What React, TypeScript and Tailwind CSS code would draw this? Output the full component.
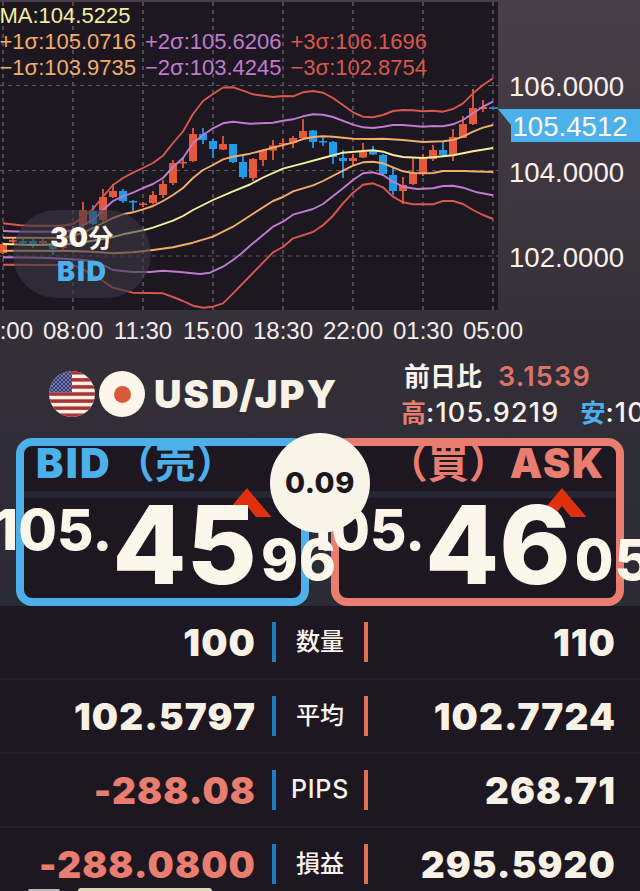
const GRID_X = [3, 73, 143, 213, 283, 353, 423, 493];
const GRID_Y = [85.5, 170.5, 256];

const TIMES = ["08:00", "11:30", "15:00", "18:30", "22:00", "01:30", "05:00"];

const PRICES = [
  { label: "106.0000", y: 96 },
  { label: "104.0000", y: 182 },
  { label: "102.0000", y: 267 },
];

// upper to lower bands
const BANDS = [
  {
    color: "#d9584c",
    points:
      "3,223.3 20,225.3 33,225.7 63,225.7 73,224 83,217 93,209 103,196.7 113,185 123,178 133,172.7 143,168 153,163 163,155.7 173,143 183,131.5 193,114 203,101 213,94 223,87.5 233,87.3 243,90.7 253,94.3 273,97 283,96 293,96.3 303,92.3 313,91 323,92.7 333,98 353,112.3 363,116.7 373,117.3 383,115 393,111 403,110 413,110.3 423,111.3 433,110.7 443,111.7 453,109 463,103.3 473,93.3 483,85 493,78.3",
  },
  {
    color: "#c07bcf",
    points:
      "3,231 23,231.7 63,231.7 73,230 83,225 93,220 103,210 113,201 123,196.3 133,192.7 143,188 153,184 163,178 173,167 183,158 193,143 203,135 213,128.3 223,123.3 233,121.7 250,123.7 273,122.7 283,120.7 293,119.3 303,116.3 313,114.3 323,114.7 333,117 353,124.7 363,127.3 373,128 383,126.7 393,125 403,125 423,126.7 433,126 443,126.3 453,124.3 463,120 473,113.3 483,106.7 493,101.7",
  },
  {
    color: "#f2ae69",
    points:
      "3,237.7 63,238 83,233 103,223 113,218 123,214.3 133,212.3 143,209.3 153,206 163,201 173,195 183,188 193,178 203,170 213,165 223,159.3 233,156.7 250,153.7 273,147.7 293,142.7 303,139 313,137 323,136.3 333,136.7 353,138.7 373,139 383,138.7 403,140 423,142 443,141.3 453,140 463,136.7 473,131.7 483,127.7 493,125",
  },
  {
    color: "#f5ef9c",
    points:
      "3,244 33,245 73,244 103,239 113,237 123,234.3 143,230.3 153,227.7 173,220.7 183,216 193,210 213,200 233,191.3 250,184.5 263,177.5 283,168.7 303,163.3 323,158 343,152.7 363,151 373,150.3 383,151.7 393,155 403,157 423,158 433,157.3 453,155.3 473,151.3 493,148",
  },
  {
    color: "#f2ae69",
    points:
      "3,250.7 73,251 93,251.7 113,253.3 133,252.3 153,250 173,247.3 193,242.7 213,236.7 233,226.7 250,215.7 273,201 283,197 293,191.3 313,185.3 323,181 343,170.7 353,165.7 363,162.3 373,161.7 383,163.3 393,167.3 403,171.3 413,173 423,173.3 433,173 443,171 463,171 493,172",
  },
  {
    color: "#c07bcf",
    points:
      "3,257.3 43,257.7 73,259.3 93,261 103,265 113,270 133,272 150,272 163,270.7 180,272 200,274 210,272.7 223,266.7 233,260 242,253 250,245.7 273,226.7 283,221.7 293,214.7 313,209 323,204 343,188.3 353,180 363,173.3 373,172.3 383,175 393,181.7 403,186.7 417,189 433,188.3 443,186 453,185.7 463,187.7 477,192.3 493,195.3",
  },
  {
    color: "#d9584c",
    points:
      "3,264.7 73,265 83,269.3 103,281 113,287.7 133,292.7 163,293.3 173,297 183,301 193,305.7 203,307.7 213,306.7 223,303.3 233,293.3 250,276 273,252.3 283,247 293,238.3 313,232 323,225.3 333,215.7 343,203.3 353,192.7 363,184.7 373,183.3 383,187.3 393,196.7 403,202.3 413,204.3 433,204.3 443,201 453,201 463,204 473,210 483,215 493,219",
  },
];

// x, high, low, body top, body bottom, direction (1 up, 0 down)
const CANDLES = [
  [3, 243, 254, 244, 253, 1],
  [13, 237, 245, 240, 242, 1],
  [23, 239, 244, 241, 243, 0],
  [33, 239, 248, 241, 245, 0],
  [43, 239, 244, 241, 243, 1],
  [53, 245, 255, 245, 249, 0],
  [63, 241, 250, 244, 248, 1],
  [73, 226, 246, 230, 244, 1],
  [83, 202, 230, 210, 225, 1],
  [93, 205, 225, 211, 224, 0],
  [103, 189, 222, 197, 220, 1],
  [113, 184, 198, 191, 197, 1],
  [123, 189, 203, 191, 201, 0],
  [133, 200, 211, 201, 202.5, 0],
  [143, 202, 207, 203.5, 205, 1],
  [153, 191, 204, 195, 203, 1],
  [163, 180, 198, 184, 195, 1],
  [173, 160, 185, 163, 183, 1],
  [183, 158, 168, 162, 163.5, 1],
  [193, 128, 162, 134, 161, 1],
  [203, 128, 144, 134, 140, 0],
  [213, 139, 158, 141, 149, 0],
  [223, 136, 150, 144, 149.5, 1],
  [233, 144, 163, 144, 162, 0],
  [243, 156, 179, 162, 177, 0],
  [253, 158, 181, 159, 178, 1],
  [263, 149, 166, 150, 160, 1],
  [273, 140, 160, 145.5, 150.5, 1],
  [283, 139, 149, 143, 144.5, 1],
  [293, 136, 148, 138, 143, 1],
  [303, 119, 139, 131, 138, 1],
  [313, 130, 148, 130.5, 142, 0],
  [323, 137, 146, 141, 142.5, 0],
  [333, 141, 164, 142, 157, 0],
  [343, 150, 178, 158, 161, 0],
  [353, 154, 165, 158, 161, 1],
  [363, 143, 158, 152, 157.5, 1],
  [373, 146, 155, 150, 154.5, 0],
  [383, 154, 175, 155, 174, 0],
  [393, 167, 195, 175, 191, 0],
  [403, 177, 204, 185, 191, 1],
  [413, 158, 185, 173, 184, 1],
  [423, 154, 176, 157, 174, 1],
  [433, 145, 161, 150, 159, 1],
  [443, 142, 156, 150, 155, 0],
  [453, 129, 161, 137, 155, 1],
  [463, 116, 138, 124, 138, 1],
  [473, 89, 125, 108, 124, 1],
  [483, 100, 112, 107, 109, 1],
];

const ROWS = [
  { label: "数量", bid: "100", ask: "110" },
  { label: "平均", bid: "102.5797", ask: "102.7724" },
  { label: "PIPS", bid: "-288.08", ask: "268.71" },
  { label: "損益", bid: "-288.0800", ask: "295.5920" },
];

function Chart() {
  return (
    <svg width="640" height="350" viewBox="0 0 640 350" className="block font-['Liberation_Sans',sans-serif]">
      <rect x="0" y="2" width="498" height="308" fill="#1d1721" />
      <g stroke="#5d5761" fill="none">
        {GRID_X.map((x) => (
          <line key={x} x1={x} x2={x} y1="2" y2="310" strokeWidth="1.6" strokeDasharray="4 4" />
        ))}
        {GRID_Y.map((y) => (
          <line key={y} x1="0" x2="498" y1={y} y2={y} strokeWidth="1.2" strokeDasharray="4 4" />
        ))}
      </g>
      {CANDLES.map(([x, high, low, top, bottom, up]) => (
        <g key={x} fill={up ? "#e4593a" : "#209be8"}>
          <rect x={x - 0.9} y={high} width="1.8" height={low - high} />
          <rect x={x - 4} y={top} width="8" height={bottom - top} />
        </g>
      ))}
      <rect x="489" y="107.3" width="9" height="1.6" fill="#209be8" />
      {BANDS.map((b, i) => (
        <polyline key={i} points={b.points} fill="none" stroke={b.color} strokeWidth="1.9" strokeLinejoin="round" />
      ))}

      <g fontSize="22">
        <text x="-0.5" y="23" fill="#f3ee9f">MA:104.5225</text>
        <text x="-0.5" y="49" fill="#f2ae69">+1σ:105.0716</text>
        <text x="-0.5" y="75" fill="#f2ae69">−1σ:103.9735</text>
        <text x="145" y="49" fill="#c07bcf">+2σ:105.6206</text>
        <text x="145" y="75" fill="#c07bcf">−2σ:103.4245</text>
        <text x="290.5" y="49" fill="#d9584c">+3σ:106.1696</text>
        <text x="290.5" y="75" fill="#d9584c">−3σ:102.8754</text>
      </g>

      <g fontSize="27.6" fill="#fbf1ea">
        {PRICES.map((p) => (
          <text key={p.label} x="509" y={p.y}>{p.label}</text>
        ))}
      </g>
      <path d="M498 109H640V142H511V125Z" fill="#4cb1ea" />
      <text x="512.5" y="136" fontSize="27.6" fill="#fff6ee">105.4512</text>

      <g fontSize="24" fill="#f4ece8">
        <text x="33" y="339" textAnchor="end">:00</text>
        {TIMES.map((t, i) => (
          <text key={t} x={GRID_X[i + 1]} y="339" textAnchor="middle">{t}</text>
        ))}
      </g>
    </svg>
  );
}

function UsFlag() {
  return (
    <svg width="46" height="46" viewBox="0 0 46 46" className="shrink-0">
      <defs>
        <clipPath id="us"><circle cx="23" cy="23" r="23" /></clipPath>
        <pattern id="stars" width="4" height="4" patternUnits="userSpaceOnUse">
          <circle cx="1" cy="1" r="0.75" fill="#d9dbec" />
          <circle cx="3" cy="3" r="0.75" fill="#d9dbec" />
        </pattern>
      </defs>
      <g clipPath="url(#us)">
        <rect width="46" height="46" fill="#fbf1e6" />
        {[0, 1, 2, 3, 4, 5, 6].map((i) => (
          <rect key={i} y={i * 7.08} width="46" height="3.54" fill="#a93636" />
        ))}
        <rect width="23" height="21.2" fill="#353a78" />
        <rect width="23" height="21.2" fill="url(#stars)" />
      </g>
    </svg>
  );
}

function QuoteBox({ side, pips, frac }: { side: "bid" | "ask"; pips: string; frac: string }) {
  const bid = side === "bid";
  return (
    <div
      className={`relative h-[168px] w-[293px] rounded-2xl border-8 bg-[#1d1721] ${
        bid ? "border-[#4cb1ea] text-[#4cb1ea]" : "border-[#e87d70] text-[#e87d70]"
      }`}
    >
      <div className={`flex h-[45px] items-center px-3 pb-[11px] text-[41px] font-bold leading-none whitespace-nowrap ${bid ? "" : "justify-end"}`}>
        {bid ? (
          <>
            <span className="mr-0.5 font-black tracking-[2.3px]">BID</span>
            <span>（売）</span>
          </>
        ) : (
          <>
            <span>（買）</span>
            <span className="-mr-px font-black tracking-[1.8px]">ASK</span>
          </>
        )}
      </div>
      <div className="h-[7px] bg-[#262735]" />
      <svg className="absolute left-[198px] top-[42px]" width="50" height="29" viewBox="0 0 50 29">
        <path d="M25 0L49.5 29H34L25 18L16 29H0.5Z" fill="#e0300e" />
      </svg>
      {/* the price runs past the frame on both sides */}
      <div className="absolute right-[-36px] top-[45px] z-10 flex items-baseline whitespace-nowrap font-extrabold leading-none text-[#fdf6ea]">
        <span className="relative -top-[34px] text-[56px]">105.</span>
        <span className="text-[108px]">{pips}</span>
        <span className="relative -top-1 ml-1 text-[56px] tracking-[1px]">{frac}</span>
      </div>
    </div>
  );
}

function Value({ text }: { text: string }) {
  return (
    <span className={`-mr-px text-right text-[37px] font-black leading-none tracking-[1.1px] ${text.startsWith("-") ? "text-[#e87d70]" : "text-[#f8f2e6]"}`}>
      {text}
    </span>
  );
}

export default function App() {
  return (
    <div className="relative h-[891px] w-[640px] overflow-hidden bg-[linear-gradient(#483f4a_0px,#3b353f_220px,#332f39_350px,#2b2b35_600px)] font-['Inter','Noto_Sans_CJK_JP',sans-serif]">
      <div className="relative">
        <Chart />
        <div className="absolute left-[13px] top-[210px] flex h-[88px] w-[138px] flex-col items-center justify-center rounded-full bg-[#3a3844]/60 text-[27px] font-black leading-[33px]">
          <span className="tracking-[0.4px] text-[#fdf6ea]">30<span className="text-[25px] font-bold">分</span></span>
          <span className="pl-px tracking-[1.8px] text-[#4cb1ea]">BID</span>
        </div>
      </div>

      <div className="flex h-[88px] items-center pl-[49px]">
        <UsFlag />
        <div className="ml-1 flex size-[46px] shrink-0 items-center justify-center rounded-full bg-[#fdf6ea]">
          <div className="size-[17px] rounded-full bg-[#d8583a]" />
        </div>
        <div className="ml-[9px] w-[247px] shrink-0 text-[38px] font-black leading-none tracking-[2.2px] text-[#f8f2e6]">USD/JPY</div>
        <div className="shrink-0 whitespace-nowrap pt-[2px] text-[27px] font-medium leading-[36px] tracking-[1.2px] text-[#fbf3ea]">
          <div className="flex items-center pl-[3px]">
            <span className="text-[26px] font-bold tracking-normal">前日比</span>
            <span className="ml-4 font-semibold text-[#dd7268]">3.1539</span>
          </div>
          <div className="flex items-center">
            <span className="text-[25px] font-bold tracking-normal text-[#e87d70]">高</span>:105.9219
            <span className="ml-[21px] text-[25px] font-bold tracking-normal text-[#4cb1ea]">安</span>:10
          </div>
        </div>
      </div>

      <div className="relative flex justify-between px-4">
        <QuoteBox side="bid" pips="45" frac="96" />
        <QuoteBox side="ask" pips="46" frac="05" />
        <div className="absolute left-[270px] -top-[5px] z-20 flex size-[100px] items-center justify-center rounded-full bg-[#f8f4e8] text-[29px] font-extrabold tracking-[0.5px] text-[#1d1721]">
          0.09
        </div>
      </div>

      <div className="bg-[#1d1721]">
        {ROWS.map((r) => (
          <div key={r.label} className="grid h-[74px] grid-cols-[255px_130px_230px] items-center border-b-2 border-[#28232d]">
            <Value text={r.bid} />
            <div className="ml-[17px] flex h-10 w-24 items-center justify-center border-x-4 border-l-[#1d7cc4] border-r-[#dd7156] text-2xl font-medium text-[#f8f2ea]">
              <span className={r.label === "PIPS" ? "text-[25px] tracking-[0.8px]" : ""}>{r.label}</span>
            </div>
            <Value text={r.ask} />
          </div>
        ))}
      </div>

      <div className="absolute bottom-0 left-[28px] flex items-end gap-[18px]">
        <div className="h-[2px] w-8 rounded-t-sm bg-[#bdb9bb]" />
        <div className="h-[3px] w-[134px] rounded-t-sm bg-[#dcd7bd]" />
      </div>
    </div>
  );
}
